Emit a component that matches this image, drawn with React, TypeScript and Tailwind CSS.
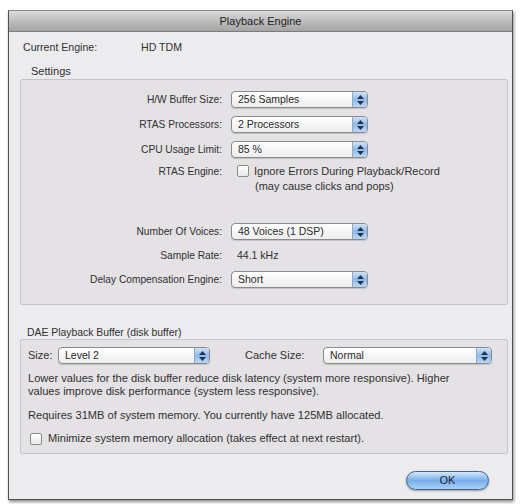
type PopupProps = {
  value: string
  width: string
}

function Popup({ value, width }: PopupProps) {
  return (
    <div
      className={`${width} h-[17px] flex items-stretch rounded-[4px] border border-[#8a8a8c] bg-gradient-to-b from-white to-[#ededee] shadow-[0_1px_1px_rgba(0,0,0,0.15)] overflow-hidden`}
    >
      <span className="flex-1 pl-[6px] leading-[15px] text-[10.5px] text-[#2a2a2a] truncate">{value}</span>
      <span className="w-[15px] border-l border-[#8fa9c8] bg-gradient-to-b from-[#cfe2f7] via-[#8fbbeb] to-[#b9d5f3] flex flex-col items-center justify-center gap-[2px]">
        <svg width="7" height="4" viewBox="0 0 7 4">
          <path d="M0 4 L3.5 0 L7 4 Z" fill="#23324d" />
        </svg>
        <svg width="7" height="4" viewBox="0 0 7 4">
          <path d="M0 0 L3.5 4 L7 0 Z" fill="#23324d" />
        </svg>
      </span>
    </div>
  )
}

function Checkbox() {
  return (
    <span className="inline-block w-[12px] h-[12px] rounded-[2px] border border-[#8c8b8e] bg-gradient-to-b from-white to-[#e9e8ea] shrink-0" />
  )
}

function Row({ label, children, h = 'h-[25px]' }: { label: string; children: React.ReactNode; h?: string }) {
  return (
    <div className={`flex items-center ${h}`}>
      <span className="w-[202px] text-right pr-[1px] text-[10.2px]">{label}</span>
      <span className="w-[8px]" />
      {children}
    </div>
  )
}

export default function App() {
  return (
    <div
      className="w-[526px] h-[504px] bg-white pt-[10px] pl-[8px] text-[11px] text-[#303030]"
      style={{ fontFamily: '"Liberation Sans", Arial, sans-serif' }}
    >
      <div className="w-[505px] border border-[#505050] border-t-[#8a8a8a] shadow-[1px_2px_3px_rgba(0,0,0,0.45)] bg-[#ecebed]">
        {/* title bar */}
        <div className="h-[21px] bg-gradient-to-b from-[#dcdcdc] via-[#bdbdbd] to-[#a4a4a4] border-b border-[#7c7c7c] flex items-center justify-center text-[11px] text-[#222]">
          Playback Engine
        </div>

        <div className="px-[11px] pt-[9px] pb-[9px]">
          <div className="flex h-[14px] items-center pl-[3px] text-[10.6px]">
            <span className="w-[118px]">Current Engine:</span>
            <span>HD TDM</span>
          </div>

          <div className="mt-[9px] h-[14px] leading-[14px] pl-[11px]">Settings</div>

          {/* settings box */}
          <div className="mt-[1px] w-[488px] h-[226px] border border-[#c6c4c8] rounded-[2px] bg-[#e4e2e5] pt-[7px]">
            <Row label="H/W Buffer Size:">
              <Popup value="256 Samples" width="w-[137px]" />
            </Row>
            <Row label="RTAS Processors:">
              <Popup value="2 Processors" width="w-[137px]" />
            </Row>
            <Row label="CPU Usage Limit:">
              <Popup value="85 %" width="w-[137px]" />
            </Row>
            <div className="flex items-start pt-[2px]">
              <span className="w-[202px] text-right pr-[1px] leading-[15px] text-[10.2px]">RTAS Engine:</span>
              <span className="w-[14px]" />
              <span className="mt-[1px]">
                <Checkbox />
              </span>
              <div className="ml-[5px] leading-[15px]">
                <div>Ignore Errors During Playback/Record</div>
                <div className="pl-[1px]">(may cause clicks and pops)</div>
              </div>
            </div>
            <div className="h-[25px]" />
            <Row label="Number Of Voices:">
              <Popup value="48 Voices (1 DSP)" width="w-[137px]" />
            </Row>
            <Row label="Sample Rate:" h="h-[24px]">
              <span className="pl-[6px] text-[10.5px]">44.1 kHz</span>
            </Row>
            <Row label="Delay Compensation Engine:" h="h-[23px]">
              <Popup value="Short" width="w-[137px]" />
            </Row>
          </div>

          <div className="mt-[22px] h-[12px] leading-[12px] pl-[7px] text-[10.4px]">DAE Playback Buffer (disk buffer)</div>

          {/* DAE box */}
          <div className="w-[488px] h-[115px] border border-[#c6c4c8] rounded-[2px] bg-[#e4e2e5] pt-[7px] px-[7px]">
            <div className="flex items-center h-[17px]">
              <span className="w-[30px]">Size:</span>
              <Popup value="Level 2" width="w-[152px]" />
              <span className="ml-[35px] w-[78px]">Cache Size:</span>
              <Popup value="Normal" width="w-[169px]" />
            </div>
            <div className="mt-[8px] leading-[13px] text-[11.1px]">
              Lower values for the disk buffer reduce disk latency (system more responsive). Higher
              <br />
              values improve disk performance (system less responsive).
            </div>
            <div className="mt-[11px] leading-[13px] text-[11.1px]">
              Requires 31MB of system memory. You currently have 125MB allocated.
            </div>
            <div className="mt-[10px] flex items-center h-[13px] pl-[2px] text-[11.1px]">
              <Checkbox />
              <span className="ml-[6px]">Minimize system memory allocation (takes effect at next restart).</span>
            </div>
          </div>

          <div className="flex justify-end mt-[17px] pr-[12px]">
            <button className="w-[83px] h-[19px] rounded-full border border-[#3d6590] bg-gradient-to-b from-[#d6e8fb] via-[#76aee9] to-[#a9d0f6] shadow-[0_1px_2px_rgba(0,0,0,0.35)] text-[11px] text-[#1c2636] leading-[17px]">
              OK
            </button>
          </div>
        </div>
      </div>
    </div>
  )
}
